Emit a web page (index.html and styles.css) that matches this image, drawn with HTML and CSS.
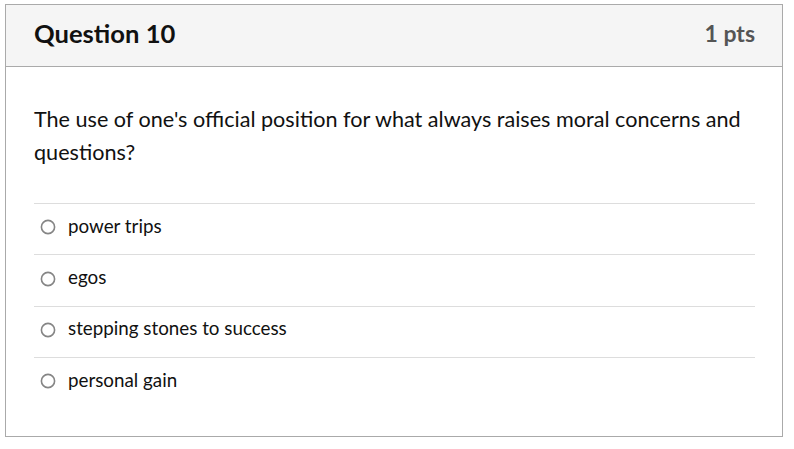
FILE: index.html
```html
<!DOCTYPE html>
<html>
<head>
<meta charset="utf-8">
<link rel="stylesheet" href="styles.css">
</head>
<body>
<div class="question">
  <div class="header">
    <span class="title">Question 10</span>
    <span class="pts">1 pts</span>
  </div>
  <div class="content">
    <p class="text">The use of one's official position for what always raises moral concerns and questions?</p>
    <div class="answers">
      <label class="answer"><svg class="radio" viewBox="0 0 16 16" width="16" height="16"><circle cx="8" cy="8" r="6.6" fill="#fff" stroke="#858585" stroke-width="1.6"/></svg><span>power trips</span></label>
      <label class="answer"><svg class="radio" viewBox="0 0 16 16" width="16" height="16"><circle cx="8" cy="8" r="6.6" fill="#fff" stroke="#858585" stroke-width="1.6"/></svg><span>egos</span></label>
      <label class="answer"><svg class="radio" viewBox="0 0 16 16" width="16" height="16"><circle cx="8" cy="8" r="6.6" fill="#fff" stroke="#858585" stroke-width="1.6"/></svg><span>stepping stones to success</span></label>
      <label class="answer"><svg class="radio" viewBox="0 0 16 16" width="16" height="16"><circle cx="8" cy="8" r="6.6" fill="#fff" stroke="#858585" stroke-width="1.6"/></svg><span>personal gain</span></label>
    </div>
  </div>
</div>
</body>
</html>
```
FILE: styles.css
```css
html, body { margin: 0; padding: 0; background: #fff; }
body { padding: 4px 0 0 5px; font-family: Lato, "Liberation Sans", sans-serif; color: #000; }
.question {
  width: 776px;
  border: 1px solid #aaaaaa;
  box-sizing: content-box;
}
.header {
  background: #f5f5f5;
  border-bottom: 1px solid #aaaaaa;
  display: flex;
  align-items: center;
  justify-content: space-between;
  padding: 0 27px 5px 28px;
  box-sizing: border-box;
  height: 62px;
}
.title { font-weight: 700; font-size: 25.6px; color: #111; }
.pts { font-weight: 700; font-size: 23px; color: #555; }
.content { padding: 36px 27px 27px 28px; }
.text { margin: 0 0 34px 0; font-size: 21.6px; line-height: 33px; color: #111; }
.answers { display: flex; flex-direction: column; }
.answer {
  display: flex;
  align-items: center;
  height: 42.4px;
  padding-bottom: 8px;
  box-sizing: content-box;
  border-top: 1px solid #dddddd;
  font-size: 18.8px;
  color: #111;
}
.radio {
  display: block;
  width: 16px; height: 16px;
  margin: 4px 12px 0 6px;
  flex: none;
}
```
